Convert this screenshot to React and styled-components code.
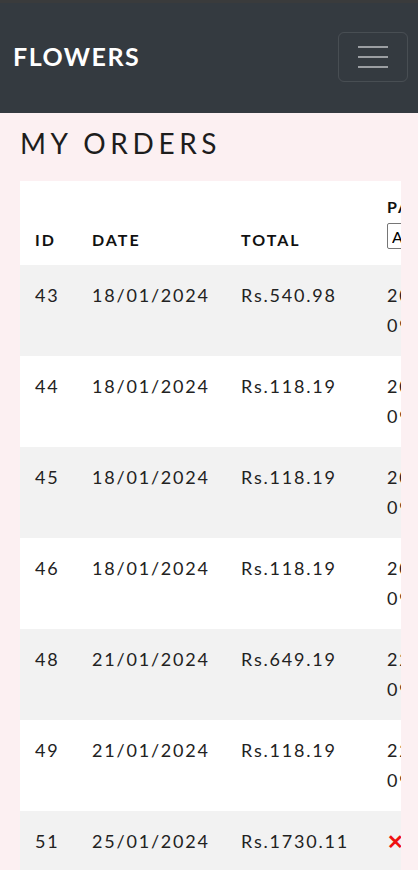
import styled, { createGlobalStyle } from "styled-components";

const GlobalStyle = createGlobalStyle`
  body {
    margin: 0;
    background: #fcf0f2;
    font-family: "Lato", "Open Sans", sans-serif;
    color: #212529;
  }
`;

const Navbar = styled.nav`
  height: 110px;
  border-top: 3px solid #3a3b3c;
  background: #343a40;
  display: flex;
  align-items: center;
  justify-content: space-between;
  padding: 0 10px 0 13px;
`;

const Brand = styled.span`
  color: #ffffff;
  font-size: 25px;
  font-weight: 700;
  letter-spacing: 1.5px;
  margin-top: -4px;
`;

const Toggler = styled.button`
  width: 70px;
  height: 50px;
  border: 1px solid rgba(255, 255, 255, 0.1);
  border-radius: 6px;
  background: transparent;
  display: flex;
  flex-direction: column;
  align-items: center;
  justify-content: center;
  gap: 8px;
  padding: 0;
  margin-top: -3px;
`;

const Bar = styled.span`
  width: 30px;
  height: 2px;
  background: #9b9ea2;
`;

const Title = styled.h1`
  margin: 12px 0 20px 20px;
  font-size: 28px;
  font-weight: 400;
  letter-spacing: 4.6px;
  color: #1d1d1d;
  line-height: 36px;
`;

const TableWrap = styled.div`
  margin: 0 17px 0 20px;
  background: #ffffff;
  overflow: hidden;
`;

const Table = styled.table`
  border-collapse: collapse;
  table-layout: fixed;
  width: 520px;
`;

const Th = styled.th`
  text-align: left;
  vertical-align: bottom;
  padding: 16px 15px;
  font-size: 16px;
  font-weight: 700;
  letter-spacing: 2px;
  color: #111;
  width: ${(p) => p.$w}px;
`;

const FilterSelect = styled.select`
  display: block;
  margin-top: 7px;
  font-family: inherit;
  font-size: 16px;
  height: 26px;
  border: 1px solid #767676;
  border-radius: 2px;
  background: #fff;
`;

const Row = styled.tr`
  background: ${(p) => (p.$odd ? "#f2f2f2" : "#ffffff")};
`;

const Td = styled.td`
  padding: 16px 15px;
  font-size: 18px;
  line-height: 29.5px;
  letter-spacing: 1.8px;
  vertical-align: top;
  color: #222;
  white-space: nowrap;
`;

const Cross = styled.span`
  color: #ee1111;
  font-weight: 700;
  font-size: 20px;
`;

const orders = [
  { id: 43, date: "18/01/2024", total: "Rs.540.98", paid: ["20/01/2024", "09:15"] },
  { id: 44, date: "18/01/2024", total: "Rs.118.19", paid: ["20/01/2024", "09:15"] },
  { id: 45, date: "18/01/2024", total: "Rs.118.19", paid: ["20/01/2024", "09:15"] },
  { id: 46, date: "18/01/2024", total: "Rs.118.19", paid: ["20/01/2024", "09:15"] },
  { id: 48, date: "21/01/2024", total: "Rs.649.19", paid: ["22/01/2024", "09:15"] },
  { id: 49, date: "21/01/2024", total: "Rs.118.19", paid: ["22/01/2024", "09:15"] },
  { id: 51, date: "25/01/2024", total: "Rs.1730.11", paid: null },
];

export default function App() {
  return (
    <>
      <GlobalStyle />
      <Navbar>
        <Brand>FLOWERS</Brand>
        <Toggler aria-label="menu">
          <Bar />
          <Bar />
          <Bar />
        </Toggler>
      </Navbar>
      <Title>MY ORDERS</Title>
      <TableWrap>
        <Table>
          <thead>
            <tr>
              <Th $w={27}>ID</Th>
              <Th $w={119}>DATE</Th>
              <Th $w={116}>TOTAL</Th>
              <Th $w={138}>
                PAYMENT
                <FilterSelect defaultValue="All">
                  <option>All</option>
                  <option>Paid</option>
                  <option>Unpaid</option>
                </FilterSelect>
              </Th>
            </tr>
          </thead>
          <tbody>
            {orders.map((o, i) => (
              <Row key={o.id} $odd={i % 2 === 0}>
                <Td>{o.id}</Td>
                <Td>{o.date}</Td>
                <Td>{o.total}</Td>
                <Td>
                  {o.paid ? (
                    <>
                      {o.paid[0]}
                      <br />
                      {o.paid[1]}
                    </>
                  ) : (
                    <Cross>✕</Cross>
                  )}
                </Td>
              </Row>
            ))}
          </tbody>
        </Table>
      </TableWrap>
    </>
  );
}
